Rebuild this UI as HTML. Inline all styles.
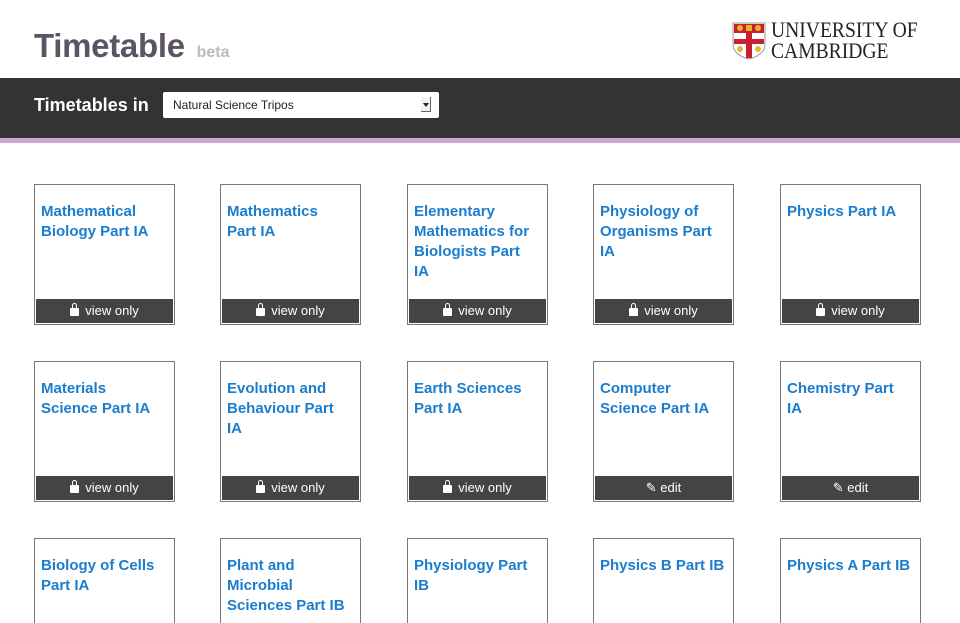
<!DOCTYPE html>
<html><head><meta charset="utf-8"><style>
*{margin:0;padding:0;box-sizing:border-box}
html,body{width:960px;height:623px;overflow:hidden}
body{background:#fff;font-family:"Liberation Sans",Arial,sans-serif;position:relative}
.title{position:absolute;left:34px;top:27px;font-size:33px;font-weight:bold;color:#5d5463;letter-spacing:-0.3px}
.title span{font-size:16px;color:#bbb;letter-spacing:0;margin-left:3px}
.logo{position:absolute;left:732px;top:22px}
.uni{position:absolute;left:771px;top:19px;font-family:"Liberation Serif",serif;color:#222;font-size:22px;line-height:21px;transform:scaleX(0.89);transform-origin:0 0;white-space:nowrap}
.nav{position:absolute;left:0;top:78px;width:960px;height:60px;background:#333}
.strip{position:absolute;left:0;top:138px;width:960px;height:5px;background:#c6a8d1}
.nav .lab{position:absolute;left:34px;top:17px;color:#fff;font-weight:bold;font-size:18px}
.sel{position:absolute;left:163px;top:14px;width:276px;height:26px;background:#fff;border-radius:2px;font-size:12px;color:#222;padding:6px 10px}
.sel i{position:absolute;right:8px;top:5px;width:10px;height:15px;border-right:1px solid #666;border-bottom:1px solid #666;background:#f2f2f2}
.sel i:after{content:"";position:absolute;left:2px;top:6px;border-left:3px solid transparent;border-right:3px solid transparent;border-top:4px solid #222}
.card{position:absolute;width:141px;height:141px;border:1px solid #777;background:#fff;overflow:hidden}
.card h3{position:absolute;left:6px;top:17px;width:122px;font-size:15px;line-height:20px;color:#1a7dcd;font-weight:bold}
.card h3.w{width:132px}
.card .b{position:absolute;left:1px;right:1px;bottom:1px;height:24px;background:#444;color:#fff;font-size:13px;text-align:center;line-height:24px}
.lk{display:inline-block;width:9px;height:8px;background:#fff;border-radius:1px;position:relative;margin-right:6px;vertical-align:-1px}
.lk:before{content:"";position:absolute;left:1.5px;top:-5px;width:3px;height:4px;border:1.5px solid #fff;border-bottom:none;border-radius:3px 3px 0 0}
</style></head><body>
<div class="title">Timetable <span>beta</span></div>
<svg class="logo" width="34" height="38" viewBox="0 0 34 38"><path d="M1 1H33V22Q33 33 17 37Q1 33 1 22Z" fill="#fff" stroke="#999"/><rect x="2" y="2" width="30" height="9" fill="#c8202f"/><rect x="14" y="11" width="6" height="25" fill="#c8202f"/><rect x="2" y="17" width="30" height="5" fill="#c8202f"/><circle cx="8" cy="6" r="3" fill="#e8b62a"/><circle cx="26" cy="6" r="3" fill="#e8b62a"/><circle cx="8" cy="27" r="3" fill="#e8b62a"/><circle cx="26" cy="27" r="3" fill="#e8b62a"/><rect x="14" y="3" width="6" height="6" fill="#e8b62a"/></svg>
<div class="uni">UNIVERSITY OF<br>CAMBRIDGE</div>
<div class="nav"><div class="lab">Timetables in</div><div class="sel">Natural Science Tripos<i></i></div></div>
<div class="strip"></div>

<div class="card" style="left:34px;top:184px"><h3>Mathematical Biology Part IA</h3><div class="b"><span class="lk"></span>view only</div></div>
<div class="card" style="left:220px;top:184px"><h3>Mathematics Part IA</h3><div class="b"><span class="lk"></span>view only</div></div>
<div class="card" style="left:407px;top:184px"><h3>Elementary Mathematics for Biologists Part IA</h3><div class="b"><span class="lk"></span>view only</div></div>
<div class="card" style="left:593px;top:184px"><h3>Physiology of Organisms Part IA</h3><div class="b"><span class="lk"></span>view only</div></div>
<div class="card" style="left:780px;top:184px"><h3>Physics Part IA</h3><div class="b"><span class="lk"></span>view only</div></div>

<div class="card" style="left:34px;top:361px"><h3>Materials Science Part IA</h3><div class="b"><span class="lk"></span>view only</div></div>
<div class="card" style="left:220px;top:361px"><h3>Evolution and Behaviour Part IA</h3><div class="b"><span class="lk"></span>view only</div></div>
<div class="card" style="left:407px;top:361px"><h3>Earth Sciences Part IA</h3><div class="b"><span class="lk"></span>view only</div></div>
<div class="card" style="left:593px;top:361px"><h3>Computer Science Part IA</h3><div class="b">✎ edit</div></div>
<div class="card" style="left:780px;top:361px"><h3>Chemistry Part IA</h3><div class="b">✎ edit</div></div>

<div class="card" style="left:34px;top:538px"><h3>Biology of Cells Part IA</h3></div>
<div class="card" style="left:220px;top:538px"><h3>Plant and Microbial Sciences Part IB</h3></div>
<div class="card" style="left:407px;top:538px"><h3>Physiology Part IB</h3></div>
<div class="card" style="left:593px;top:538px"><h3 class="w">Physics B Part IB</h3></div>
<div class="card" style="left:780px;top:538px"><h3 class="w">Physics A Part IB</h3></div>
</body></html>
